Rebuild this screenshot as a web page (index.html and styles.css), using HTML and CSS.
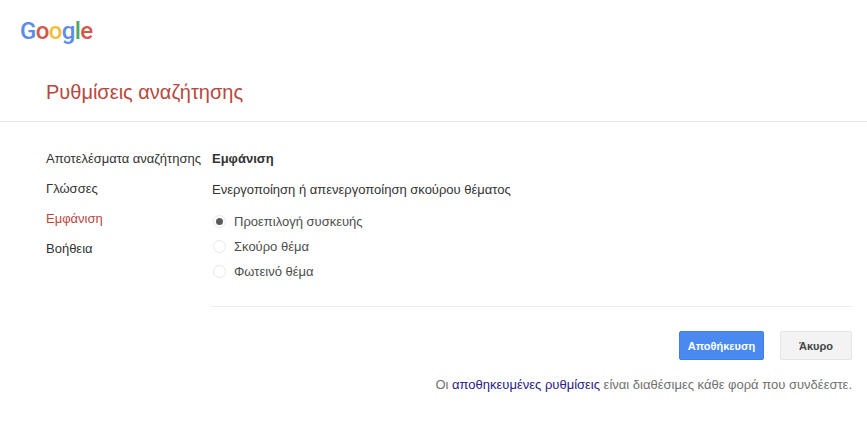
FILE: index.html
```html
<!DOCTYPE html>
<html lang="el">
<head>
    <meta charset="UTF-8">
    <meta name="viewport" content="width=device-width, initial-scale=1.0">
    <link rel="stylesheet" href="styles.css">
</head>
<body>
    <header class="top-bar">
        <div class="logo"><span class="blue">G</span><span class="red">o</span><span class="yellow">o</span><span class="blue">g</span><span class="green">l</span><span class="red">e</span></div>
    </header>
    <h1 class="page-title">Ρυθμίσεις αναζήτησης</h1>
    <div class="settings">
        <nav class="side-nav">
            <a href="#">Αποτελέσματα αναζήτησης</a>
            <a href="#">Γλώσσες</a>
            <a href="#" class="active">Εμφάνιση</a>
            <a href="#">Βοήθεια</a>
        </nav>
        <main class="content">
            <h2>Εμφάνιση</h2>
            <p class="description">Ενεργοποίηση ή απενεργοποίηση σκούρου θέματος</p>
            <div class="radio-list">
                <div class="radio-row"><span class="radio checked"></span>Προεπιλογή συσκευής</div>
                <div class="radio-row"><span class="radio"></span>Σκούρο θέμα</div>
                <div class="radio-row"><span class="radio"></span>Φωτεινό θέμα</div>
            </div>
            <div class="actions">
                <button class="btn btn-save">Αποθήκευση</button>
                <button class="btn btn-cancel">Άκυρο</button>
            </div>
            <p class="saved-note">Οι <a href="#">αποθηκευμένες ρυθμίσεις</a> είναι διαθέσιμες κάθε φορά που συνδέεστε.</p>
        </main>
    </div>
</body>
</html>
```

FILE: styles.css
```css
/* Base styles */
body {
    font-family: 'Liberation Sans', Arial, sans-serif;
    font-size: 13px;
    margin: 0;
    background-color: #ffffff;
    color: #333333;
}

/* Header */
.top-bar {
    height: 76px;
    padding: 12px 0 0 20px;
    box-sizing: border-box;
}

.logo {
    font-family: Roboto, sans-serif;
    font-size: 24px;
    font-weight: 500;
    line-height: 38px;
    letter-spacing: -0.6px;
}

.blue { color: #5a8de8; }
.red { color: #d0584c; }
.yellow { color: #eec03a; }
.green { color: #4ea862; }

.page-title {
    margin: 0;
    height: 45px;
    padding-left: 46px;
    font-size: 20px;
    font-weight: normal;
    line-height: 32px;
    color: #b8483e;
    border-bottom: 1px solid #e5e5e5;
}

/* Layout */
.settings {
    display: flex;
    padding: 29px 15px 0 46px;
}

.side-nav {
    display: flex;
    flex-direction: column;
    gap: 15px;
    width: 165px;
    flex-shrink: 0;
}

.side-nav a {
    line-height: 15px;
    color: #333333;
    text-decoration: none;
}

.side-nav a.active {
    color: #b8483e;
}

.content {
    flex: 1;
}

.content h2 {
    margin: 0 0 16px 1px;
    font-size: 13px;
    line-height: 15px;
}

.description {
    margin: 0 0 17px 1px;
    line-height: 15px;
}

/* Radios */
.radio-list {
    display: flex;
    flex-direction: column;
    gap: 10px;
    padding-bottom: 27px;
    border-bottom: 1px solid #ebebeb;
}

.radio-row {
    display: flex;
    align-items: center;
    height: 15px;
    color: #4d4d4d;
}

.radio {
    width: 13px;
    height: 13px;
    margin: 0 8px 0 2px;
    border: 1px solid #e8e8e8;
    border-radius: 50%;
    box-sizing: border-box;
    display: flex;
    align-items: center;
    justify-content: center;
}

.radio.checked::before {
    content: '';
    width: 7px;
    height: 7px;
    border-radius: 50%;
    background-color: #5c5c5c;
}

/* Buttons */
.actions {
    display: flex;
    justify-content: flex-end;
    gap: 16px;
    margin-top: 24px;
}

.btn {
    height: 29px;
    padding: 0;
    font-family: inherit;
    font-size: 11px;
    font-weight: bold;
    border-radius: 2px;
}

.btn-save {
    width: 85px;
    color: #ffffff;
    background-color: #4a89f0;
    border: 1px solid #3f7fe6;
}

.btn-cancel {
    width: 72px;
    color: #444444;
    background-color: #f3f3f3;
    border: 1px solid #e4e4e4;
}

.saved-note {
    margin: 17px 0 0;
    line-height: 15px;
    font-size: 13px;
    text-align: right;
    color: #707070;
}

.saved-note a {
    color: #29207f;
    text-decoration: none;
}
```
